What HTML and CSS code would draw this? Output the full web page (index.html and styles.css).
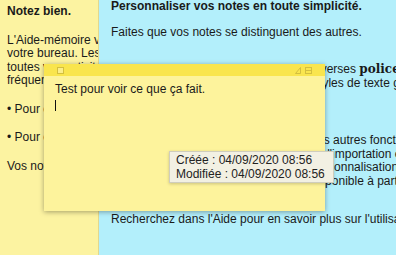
FILE: index.html
```html
<!DOCTYPE html>
<html lang="fr">
<head>
    <meta charset="UTF-8">
    <title>Aide-mémoire</title>
    <link rel="stylesheet" href="styles.css">
</head>
<body>

<div class="desk">

    <div class="note note-back">
        <p class="title">Notez bien.</p>
        <p class="para">L'Aide-mémoire vous permet de garder des notes sur<br>
            votre bureau. Les notes restent visibles pendant<br>
            toutes vos activités : idéal pour les informations<br>
            fréquemment utilisées.</p>
        <p class="para first-item">• Pour créer une note, choisissez Fichier &gt; Nouvelle note.</p>
        <p class="para">• Pour classer vos notes, utilisez le menu Fenêtre.</p>
        <p class="para">Vos notes sont enregistrées automatiquement.</p>
    </div>

    <div class="note note-blue">
        <p class="title">Personnaliser vos notes en toute simplicité.</p>
        <p class="intro">Faites que vos notes se distinguent des autres.</p>
        <p class="item spaced">• Mettez en forme votre texte grâce à diverses <b class="fancy">polices</b>, couleurs,<br>
            plusieurs couleurs, tailles de police et styles de texte gras ou italiques.</p>
        <p class="item">• Via le menu Notes découvrez toutes les autres fonctionnalités,<br>
            telles que toutes les fonctions évoluées d'importation et<br>
            l'exportation, ainsi que les options de personnalisation<br>
            du texte de vos notes, est désormais disponible à partir du menu.</p>
        <p class="outro">Recherchez dans l'Aide pour en savoir plus sur l'utilisation de l'Aide-mémoire.</p>
    </div>

    <!-- la note au premier plan -->
    <div class="sticky">
        <div class="sticky-bar">
            <span class="close-box"></span>
            <svg class="bar-icons" width="17" height="7" viewBox="0 0 17 7">
                <path d="M5.5 0.5 L5.5 6.5 L0.5 6.5 Z" fill="none" stroke="#d3bf3f" stroke-width="1"/>
                <rect x="10.5" y="0.5" width="6" height="6" fill="none" stroke="#d3bf3f" stroke-width="1"/>
                <line x1="10.5" y1="3.5" x2="16.5" y2="3.5" stroke="#d3bf3f" stroke-width="1"/>
            </svg>
        </div>
        <div class="sticky-body">
            <p>Test pour voir ce que ça fait.</p>
            <span class="caret"></span>
        </div>
    </div>

    <div class="tip">
        Créée : 04/09/2020 08:56<br>
        Modifiée : 04/09/2020 08:56
    </div>

</div>

</body>
</html>
```

FILE: styles.css
```css
body {
    margin: 0;
    font-family: "Liberation Sans", Arial, sans-serif;
    font-size: 12px;
    line-height: 13.5px;
    color: #1a1a1a;
}

p {
    margin: 0;
}

.desk {
    position: relative;
    display: flex;
    width: 396px;
    height: 255px;
    overflow: hidden;
}

.note {
    white-space: nowrap;
    overflow: hidden;
}

.title {
    font-weight: bold;
}

/* note jaune derrière */
.note-back {
    flex: none;
    box-sizing: border-box;
    width: 99px;
    padding: 5px 0 0 7px;
    background-color: #fcf3a1;
    border-right: 1px solid #e2d88e;
}

.note-back .title {
    margin-bottom: 15px;
}

.note-back .para {
    margin-bottom: 15px;
}

.note-back .first-item {
    margin-top: 5px;
}

/* note bleue */
.note-blue {
    flex: 1;
    padding: 0 0 0 12px;
    background-color: #b3effb;
}

.note-blue .title {
    margin-bottom: 12px;
}

.note-blue .intro {
    margin-bottom: 24px;
}

.note-blue .item {
    margin-bottom: 25px;
}

.note-blue .spaced {
    margin-bottom: 44px;
}

.fancy {
    font-family: "DejaVu Serif", serif;
    font-size: 12px;
    font-weight: bold;
}

/* note au premier plan */
.sticky {
    position: absolute;
    left: 44px;
    top: 64px;
    width: 281px;
    height: 147px;
    background-color: #fdf39c;
    box-shadow: 0 1px 5px rgba(0, 0, 0, 0.35);
}

.sticky-bar {
    display: flex;
    align-items: center;
    justify-content: space-between;
    height: 12px;
    padding: 0 13px;
    background-color: #f9e54e;
}

.close-box {
    width: 5px;
    height: 5px;
    border: 1px solid #d3bf3f;
    background-color: #fbee8a;
}

.bar-icons {
    margin-top: 1px;
}

.sticky-body {
    padding: 7px 11px;
}

.caret {
    display: block;
    width: 1px;
    height: 11px;
    margin-top: 3px;
    background-color: #111;
}

/* info-bulle */
.tip {
    position: absolute;
    left: 169px;
    top: 151px;
    padding: 1px 8px 1px 6px;
    line-height: 14px;
    background-color: #f2f0e3;
    border: 1px solid #cfcdbd;
    color: #222;
    white-space: nowrap;
    box-shadow: 0 1px 3px rgba(0, 0, 0, 0.2);
}
```
